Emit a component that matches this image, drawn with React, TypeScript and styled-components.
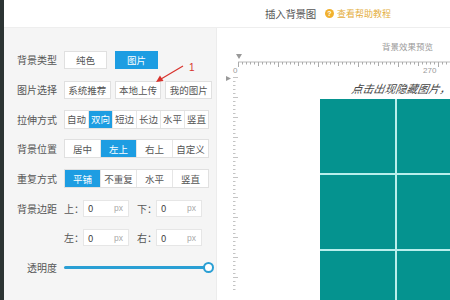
import React from 'react';
import styled, { createGlobalStyle } from 'styled-components';

const GlobalStyle = createGlobalStyle`
  html, body { margin: 0; padding: 0; background: #fff; }
  body { font-family: "Noto Sans CJK SC", "Noto Sans", sans-serif; }
`;

const BLUE = '#1d9de2';

const Page = styled.div`
  display: flex;
  width: 450px;
  height: 300px;
  overflow: hidden;
`;

const Strip = styled.div`
  width: 4px;
  flex-shrink: 0;
  background: #2c3433;
`;

const Dialog = styled.div`
  flex: 1;
  min-width: 0;
  display: flex;
  flex-direction: column;
  background: #fff;
`;

const Header = styled.div`
  height: 28px;
  flex-shrink: 0;
  display: flex;
  align-items: center;
  padding-left: 261px;
  border-bottom: 1px solid #eee;
  box-sizing: border-box;
`;

const Title = styled.span`
  font-size: 10.5px;
  color: #555;
  letter-spacing: -0.3px;
`;

const Help = styled.span`
  display: flex;
  align-items: center;
  margin-left: 9px;
  font-size: 9px;
  color: #e4ae3c;
`;

const HelpIcon = styled.span`
  width: 9px;
  height: 9px;
  border-radius: 50%;
  background: #f1b12e;
  color: #fff;
  font-size: 7px;
  font-weight: bold;
  line-height: 9px;
  text-align: center;
  margin-right: 3px;
  font-family: "Liberation Sans", sans-serif;
`;

const Body = styled.div`
  flex: 1;
  display: flex;
  min-height: 0;
  min-width: 0;
`;

const Panel = styled.div`
  position: relative;
  width: 213px;
  flex-shrink: 0;
  background: #f5f5f5;
  border-right: 1px solid #ececec;
  padding-top: 17px;
  box-sizing: border-box;
`;

const Row = styled.div`
  height: 29.7px;
  display: flex;
  align-items: center;
`;

const Label = styled.span`
  width: 53px;
  flex-shrink: 0;
  text-align: right;
  font-size: 10px;
  color: #555;
  margin-right: 7px;
`;

const Button = styled.span<{ $active?: boolean; $w: number }>`
  width: ${p => p.$w}px;
  height: 18px;
  box-sizing: border-box;
  display: flex;
  align-items: center;
  justify-content: center;
  font-size: 9.5px;
  color: ${p => (p.$active ? '#fff' : '#555')};
  background: ${p => (p.$active ? BLUE : '#fff')};
  border: 1px solid ${p => (p.$active ? BLUE : '#e0e0e0')};
  margin-right: ${p => (p.$w > 45 ? 4 : 8)}px;
  white-space: nowrap;
`;

const Segments = styled.div`
  display: flex;
  width: 145px;
  height: 19px;
  box-sizing: border-box;
  border: 1px solid #e0e0e0;
  background: #fff;
`;

const Segment = styled.span<{ $active?: boolean }>`
  flex: 1;
  display: flex;
  align-items: center;
  justify-content: center;
  font-size: 9.5px;
  white-space: nowrap;
  color: ${p => (p.$active ? '#fff' : '#555')};
  background: ${p => (p.$active ? BLUE : 'transparent')};
  & + & { border-left: 1px solid #e6e6e6; }
`;

const Side = styled.span`
  width: 19px;
  font-size: 10px;
  color: #555;
  white-space: nowrap;
`;

const Field = styled.span`
  width: 46px;
  height: 17px;
  box-sizing: border-box;
  display: flex;
  align-items: center;
  justify-content: space-between;
  padding: 0 5px 0 4px;
  background: #fff;
  border: 1px solid #e6e6e6;
  font-size: 9.5px;
  color: #444;
  margin-right: 8px;
`;

const Unit = styled.span`
  color: #aaa;
  font-size: 8.5px;
  font-family: "Liberation Sans", sans-serif;
`;

const Track = styled.div`
  position: relative;
  width: 143px;
  height: 3px;
  background: #2a9fd4;
  border-radius: 2px;
`;

const Thumb = styled.span`
  position: absolute;
  right: -7px;
  top: -4px;
  width: 7px;
  height: 7px;
  border-radius: 50%;
  border: 2px solid #2a9fd4;
  background: #fff;
`;

const Annotation = styled.svg`
  position: absolute;
  left: 0;
  top: 0;
  pointer-events: none;
`;

const Preview = styled.div`
  flex: 1;
  display: flex;
  flex-direction: column;
  background: #fff;
  min-width: 0;
  overflow: hidden;
`;

const Caption = styled.div`
  font-size: 8.5px;
  color: #999;
  text-align: right;
  padding: 12px 17px 0 0;
  height: 19px;
  line-height: 12px;
`;

const Stage = styled.div`
  display: grid;
  grid-template-columns: 12px 1fr;
  grid-template-rows: 22px 1fr;
  padding-left: 9px;
  flex: 1;
`;

const TopRuler = styled.svg`
  grid-column: 1 / 3;
  display: block;
`;

const SideRuler = styled.svg`
  display: block;
`;

const Canvas = styled.div`
  display: flex;
  flex-direction: column;
  padding-top: 8px;
  min-width: 0;
`;

const Hint = styled.div`
  margin-left: 114px;
  font-size: 11px;
  font-style: italic;
  color: #444;
  white-space: nowrap;
  line-height: 12px;
  transform: skewX(-10deg);
`;

const Tiles = styled.div`
  margin: 5px 0 0 82px;
  display: grid;
  grid-template-columns: 75px 75px;
  grid-auto-rows: 74px;
  gap: 2px;
  background: #b9efec;
  width: max-content;
`;

const Tile = styled.div`
  background: #05938f;
`;

const Choice = ({ items, active, w }: { items: string[]; active?: number; w: number }) => (
  <>
    {items.map((t, i) => (
      <Button key={t} $w={w} $active={i === active}>{t}</Button>
    ))}
  </>
);

const Group = ({ items, active }: { items: string[]; active: number }) => (
  <Segments>
    {items.map((t, i) => (
      <Segment key={t} $active={i === active}>{t}</Segment>
    ))}
  </Segments>
);

const topTicks = Array.from({ length: 54 }, (_, i) => i);
const sideTicks = Array.from({ length: 56 }, (_, i) => i);

export default function App() {
  return (
    <>
      <GlobalStyle />
      <Page>
        <Strip />
        <Dialog>
          <Header>
            <Title>插入背景图</Title>
            <Help>
              <HelpIcon>?</HelpIcon>
              查看帮助教程
            </Help>
          </Header>
          <Body>
            <Panel>
              <Row>
                <Label>背景类型</Label>
                <Choice items={['纯色', '图片']} active={1} w={43} />
              </Row>
              <Row>
                <Label>图片选择</Label>
                <Choice items={['系统推荐', '本地上传', '我的图片']} w={48} />
              </Row>
              <Row>
                <Label>拉伸方式</Label>
                <Group items={['自动', '双向', '短边', '长边', '水平', '竖直']} active={1} />
              </Row>
              <Row>
                <Label>背景位置</Label>
                <Group items={['居中', '左上', '右上', '自定义']} active={1} />
              </Row>
              <Row>
                <Label>重复方式</Label>
                <Group items={['平铺', '不重复', '水平', '竖直']} active={0} />
              </Row>
              <Row>
                <Label>背景边距</Label>
                <Side>上：</Side>
                <Field>0<Unit>px</Unit></Field>
                <Side>下：</Side>
                <Field>0<Unit>px</Unit></Field>
              </Row>
              <Row>
                <Label />
                <Side>左：</Side>
                <Field>0<Unit>px</Unit></Field>
                <Side>右：</Side>
                <Field>0<Unit>px</Unit></Field>
              </Row>
              <Row>
                <Label>透明度</Label>
                <Track>
                  <Thumb />
                </Track>
              </Row>
              <Annotation width="213" height="80">
                <line x1="179" y1="38" x2="157" y2="51" stroke="#d8322c" strokeWidth="1.2" />
                <polygon points="152,54 156,47.5 159.5,53" fill="#d8322c" />
                <text x="185" y="43" fontSize="10" fill="#d8322c" fontFamily="Liberation Sans, sans-serif">1</text>
              </Annotation>
            </Panel>
            <Preview>
              <Caption>背景效果预览</Caption>
              <Stage>
                <TopRuler width="224" height="22">
                  <polygon points="10,2 16,2 13,7" fill="#999" />
                  <line x1="12" y1="10" x2="224" y2="10" stroke="#bbb" strokeWidth="1" />
                  {topTicks.map(i => (
                    <line
                      key={i}
                      x1={12.5 + i * 4}
                      x2={12.5 + i * 4}
                      y1="10"
                      y2={i % 10 === 0 ? 15 : i % 5 === 0 ? 14 : 12.5}
                      stroke="#aaa"
                      strokeWidth="1"
                    />
                  ))}
                  <text x="7" y="21" fontSize="8" fill="#999" fontFamily="Liberation Sans, sans-serif">0</text>
                  <text x="197" y="21" fontSize="8" fill="#999" fontFamily="Liberation Sans, sans-serif">270</text>
                </TopRuler>
                <SideRuler width="14" height="218">
                  <polygon points="0,2 0,7 5,4.5" fill="#999" />
                  {sideTicks.map(i => (
                    <line
                      key={i}
                      x1="7"
                      x2={i % 5 === 0 ? 12 : 9.5}
                      y1={3.5 + i * 4}
                      y2={3.5 + i * 4}
                      stroke="#c4c4c4"
                      strokeWidth="1"
                    />
                  ))}
                </SideRuler>
                <Canvas>
                  <Hint>点击出现隐藏图片，</Hint>
                  <Tiles>
                    {Array.from({ length: 6 }, (_, i) => (
                      <Tile key={i} />
                    ))}
                  </Tiles>
                </Canvas>
              </Stage>
            </Preview>
          </Body>
        </Dialog>
      </Page>
    </>
  );
}
